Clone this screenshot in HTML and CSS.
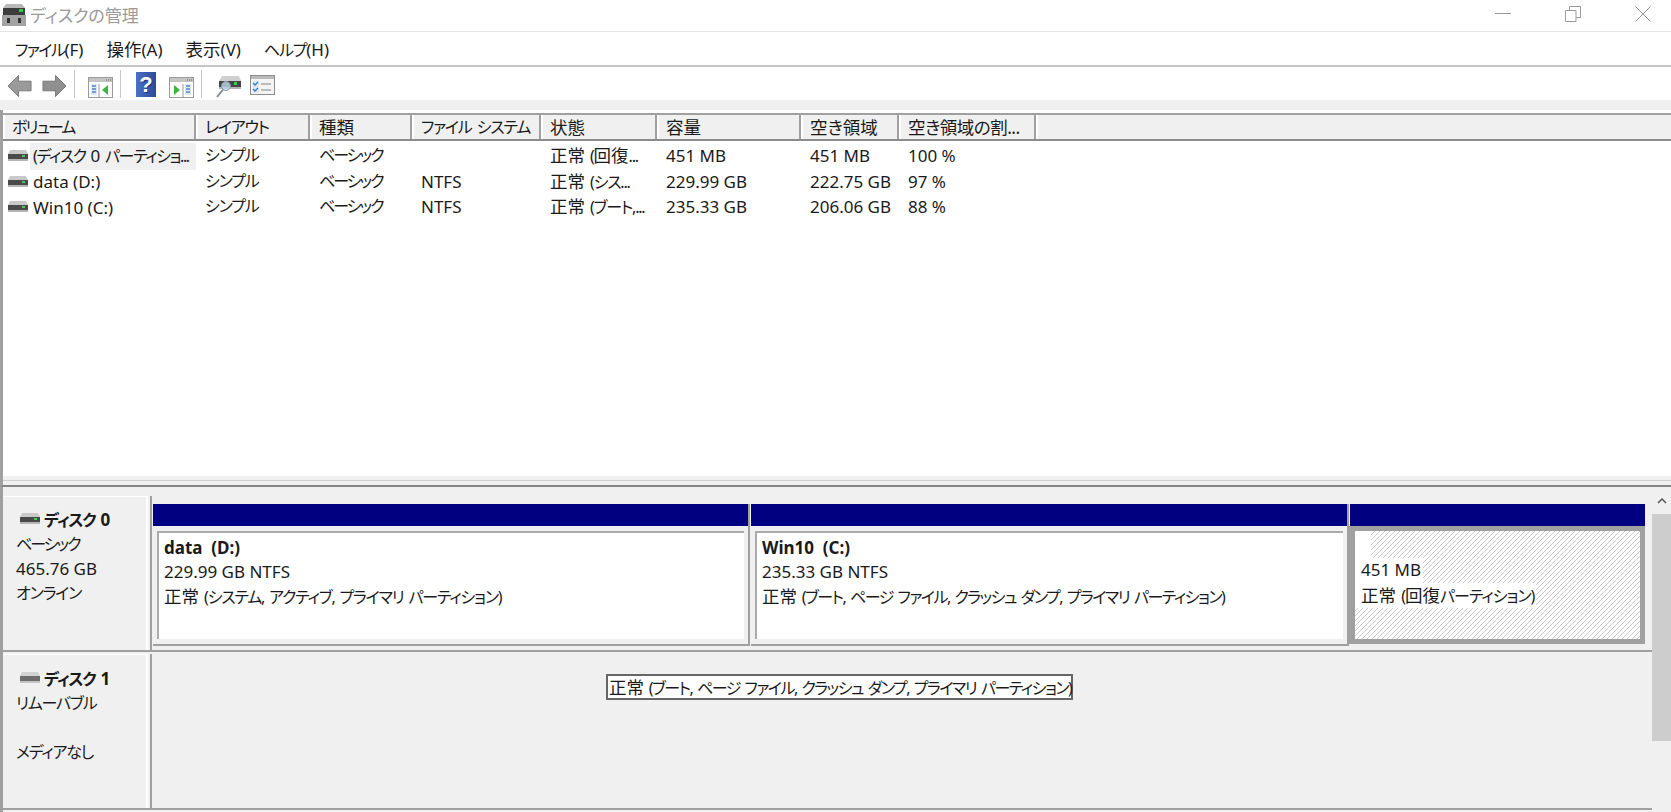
FILE: index.html
```html
<!DOCTYPE html>
<html lang="ja">
  <head>
    <meta charset="UTF-8" />
    <title>ディスクの管理</title>
    <link rel="stylesheet" href="styles.css">
  </head>
  <body>
    <svg class="sprites" width="0" height="0" aria-hidden="true">
      <symbol id="drive" viewBox="0 0 20 12">
        <path d="M2 0h16l2 4H0z" fill="#c9c9c9" />
        <rect x="0" y="4" width="20" height="5" fill="#4a4a4a" />
        <rect x="14" y="5" width="3" height="2" fill="#3fd04a" />
        <rect x="0" y="9" width="20" height="2" fill="#b5b5b5" />
      </symbol>
      <symbol id="drive-off" viewBox="0 0 20 12">
        <path d="M2 0h16l2 4H0z" fill="#d2d2d2" />
        <rect x="0" y="4" width="20" height="5" fill="#6c6c6c" />
        <rect x="0" y="9" width="20" height="2" fill="#c4c4c4" />
      </symbol>
    </svg>

    <div class="app">
      <header class="titlebar">
        <div class="title">
          <svg class="title-icon" width="26" height="23" viewBox="0 0 26 23">
            <path d="M5 0h16l3 4H2z" fill="#b9b9b9" />
            <rect x="2" y="4" width="22" height="7" fill="#3c3c3c" />
            <rect x="18" y="5" width="4" height="3" fill="#35c24a" />
            <rect x="1" y="11" width="24" height="11" fill="#a3a3a3" />
            <rect x="6" y="14" width="3" height="5" fill="#333" />
            <rect x="17" y="14" width="3" height="5" fill="#333" />
          </svg>
          <span>ディスクの管理</span>
        </div>
        <div class="win-controls">
          <svg width="16" height="16" viewBox="0 0 16 16"><path d="M0 7.5h16" /></svg>
          <svg width="16" height="16" viewBox="0 0 16 16"><path d="M.5 4.5h10.5v11H.5zM4.5 4.500V.5h11v11H11" /></svg>
          <svg width="16" height="16" viewBox="0 0 16 16"><path d="M.5.5l15 15M15.500.5l-15 15" /></svg>
        </div>
      </header>

      <nav class="menubar">
        <span class="menu-file">ファイル<span class="lat">(F)</span></span>
        <span><span class="kj">操作</span><span class="lat">(A)</span></span>
        <span><span class="kj">表示</span><span class="lat">(V)</span></span>
        <span>ヘルプ<span class="lat">(H)</span></span>
      </nav>

      <div class="toolbar">
        <svg class="tool-arrow" width="25" height="24" viewBox="0 0 26 24">
          <path d="M1 12L12 1v6h13v10H12v6z" fill="#9a9a9a" stroke="#777" />
        </svg>
        <svg class="tool-arrow next" width="25" height="24" viewBox="0 0 26 24">
          <path d="M25 12L14 1v6H1v10h13v6z" fill="#8f8f8f" stroke="#777" />
        </svg>
        <i class="tool-sep"></i>
        <svg class="tool-win" width="25" height="21" viewBox="0 0 25 21">
          <rect x=".5" y=".5" width="24" height="20" fill="#fff" stroke="#9a9a9a" />
          <rect x="1" y="1" width="23" height="4" fill="#c4c4c4" />
          <path d="M18 3h1M20 3h1M22 3h1" stroke="#666" />
          <rect x="3" y="7" width="6" height="11" fill="#dbe7f3" />
          <path d="M4 9h4M4 12h4M4 15h4" stroke="#4f8bc9" stroke-width="1.500" />
          <path d="M11 7v13" stroke="#9a9a9a" />
          <path d="M14 13l6-5v10z" fill="#3eb53e" />
        </svg>
        <i class="tool-sep"></i>
        <span class="tool-help">?</span>
        <svg class="tool-win" width="25" height="21" viewBox="0 0 25 21">
          <rect x=".5" y=".5" width="24" height="20" fill="#fff" stroke="#9a9a9a" />
          <rect x="1" y="1" width="23" height="4" fill="#c4c4c4" />
          <path d="M18 3h1M20 3h1M22 3h1" stroke="#666" />
          <rect x="16" y="7" width="6" height="11" fill="#dbe7f3" />
          <path d="M17 9h4M17 12h4M17 15h4" stroke="#4f8bc9" stroke-width="1.500" />
          <path d="M14 7v13" stroke="#9a9a9a" />
          <path d="M5 8l6 5-6 5z" fill="#3eb53e" />
        </svg>
        <i class="tool-sep"></i>
        <svg class="tool-find" width="25" height="23" viewBox="0 0 25 23">
          <path d="M6 1h17l2 5H3z" fill="#cfcfcf" />
          <rect x="3" y="6" width="22" height="6" fill="#444" />
          <rect x="18" y="7" width="3" height="3" fill="#3fd04a" />
          <rect x="3" y="12" width="22" height="2" fill="#b5b5b5" />
          <circle cx="10" cy="11" r="4.500" fill="#bcd9ee" fill-opacity=".8" stroke="#8a9aa8" />
          <path d="M7 14.500L1 22" stroke="#8a8a8a" stroke-width="2" />
        </svg>
        <svg class="tool-check" width="25" height="20" viewBox="0 0 25 20">
          <rect x=".5" y=".5" width="24" height="19" fill="#f4f4f4" stroke="#8c8c8c" />
          <rect x="1" y="1" width="23" height="3" fill="#bbb" />
          <rect x="3" y="6" width="6" height="12" fill="#dbe7f3" />
          <path d="M3 8l2 2 3-3M3 14l2 2 3-3" fill="none" stroke="#2f7fd0" stroke-width="1.300" />
          <path d="M11 9h10M11 15h10" stroke="#a8a8a8" stroke-width="1.500" />
        </svg>
      </div>
      <div class="toolstrip"></div>

      <section class="volumes">
        <div class="vol-grid vol-head">
          <div class="tight">ボリューム</div>
          <div>レイアウト</div>
          <div class="kj">種類</div>
          <div>ファイル システム</div>
          <div class="kj">状態</div>
          <div class="kj">容量</div>
          <div class="kj">空き領域</div>
          <div class="kj squeeze">空き領域の割...</div>
          <div class="head-fill"></div>
        </div>
        <div class="vol-grid vol-row">
          <div class="vol-cell"><svg class="drive-icon" width="20" height="12"><use href="#drive" /></svg><span class="vol-name selected">(ディスク <span class="lat">0</span> パーティショ...</span></div>
          <div>シンプル</div>
          <div class="tight">ベーシック</div>
          <div></div>
          <div><span class="kj">正常</span> (<span class="kj">回復</span>...</div>
          <div class="lat">451 MB</div>
          <div class="lat">451 MB</div>
          <div class="lat">100 %</div>
        </div>
        <div class="vol-grid vol-row">
          <div class="vol-cell"><svg class="drive-icon" width="20" height="12"><use href="#drive" /></svg><span class="vol-name lat">data (D:)</span></div>
          <div>シンプル</div>
          <div class="tight">ベーシック</div>
          <div class="lat">NTFS</div>
          <div><span class="kj">正常</span> (シス...</div>
          <div class="lat">229.99 GB</div>
          <div class="lat">222.75 GB</div>
          <div class="lat">97 %</div>
        </div>
        <div class="vol-grid vol-row">
          <div class="vol-cell"><svg class="drive-icon" width="20" height="12"><use href="#drive" /></svg><span class="vol-name lat">Win10 (C:)</span></div>
          <div>シンプル</div>
          <div class="tight">ベーシック</div>
          <div class="lat">NTFS</div>
          <div><span class="kj">正常</span> (ブート,...</div>
          <div class="lat">235.33 GB</div>
          <div class="lat">206.06 GB</div>
          <div class="lat">88 %</div>
        </div>
      </section>

      <div class="splitter"></div>

      <section class="lower">
        <div class="disks">
          <div class="disk disk-0">
            <div class="disk-label">
              <div class="disk-title"><svg class="drive-icon" width="20" height="12"><use href="#drive" /></svg><b>ディスク <span class="lat">0</span></b></div>
              <div class="tight">ベーシック</div>
              <div class="lat">465.76 GB</div>
              <div>オンライン</div>
            </div>
            <div class="disk-body">
              <div class="partition part-data">
                <div class="part-head"></div>
                <div class="part-box">
                  <div class="part-inner">
                    <b class="lat">data&nbsp;&nbsp;(D:)</b>
                    <div class="lat">229.99 GB NTFS</div>
                    <div class="status-data"><span class="kj">正常</span> (システム, アクティブ, プライマリ パーティション)</div>
                  </div>
                </div>
              </div>
              <div class="partition part-win">
                <div class="part-head"></div>
                <div class="part-box">
                  <div class="part-inner">
                    <b class="lat">Win10&nbsp;&nbsp;(C:)</b>
                    <div class="lat">235.33 GB NTFS</div>
                    <div class="status-long"><span class="kj">正常</span> (ブート, ページ ファイル, クラッシュ ダンプ, プライマリ パーティション)</div>
                  </div>
                </div>
              </div>
              <div class="partition part-rec">
                <div class="part-head"></div>
                <div class="part-box hatch-frame">
                  <div class="hatch">
                    <div class="hatch-blank"></div>
                    <div class="hatch-line lat">451 MB</div>
                    <div class="hatch-line"><span class="kj">正常</span> (<span class="kj">回復</span>パーティション)</div>
                  </div>
                </div>
              </div>
            </div>
          </div>

          <div class="disk disk-1">
            <div class="disk-label">
              <div class="disk-title"><svg class="drive-icon" width="20" height="12"><use href="#drive-off" /></svg><b>ディスク <span class="lat">1</span></b></div>
              <div>リムーバブル</div>
              <div>&nbsp;</div>
              <div>メディアなし</div>
            </div>
            <div class="disk-body"></div>
          </div>
        </div>

        <div class="scrollbar">
          <div class="scroll-up">
            <svg width="10" height="6" viewBox="0 0 10 6"><path d="M1 5l4-4 4 4" /></svg>
          </div>
          <div class="scroll-thumb"></div>
        </div>

        <div class="tooltip status-long"><span class="kj">正常</span> (ブート, ページ ファイル, クラッシュ ダンプ, プライマリ パーティション)</div>
      </section>
    </div>
  </body>
</html>
```

FILE: styles.css
```css
:root {
  --panel: #f0f0f0;
  --line: #a0a0a0;
  --text: #1a1a1a;
  --navy: #000080;
  --cols: 193px 114px 102px 129px 116px 144px 98px 137px 1fr;
}

html,
body {
  margin: 0;
  padding: 0;
  height: 100%;
  overflow: hidden;
  background: #fff;
}

body {
  font-family: "Noto Sans", "Noto Sans CJK JP", sans-serif;
  font-size: 16px;
  font-feature-settings: "palt";
  letter-spacing: -1.2px; /* kana runs narrow in the original UI font */
  word-spacing: 2px;
  color: var(--text);
}

/* latin and kanji are wider than the kana next to them */
.lat {
  font-size: 17px;
  letter-spacing: 0;
  word-spacing: 0;
}
.kj {
  font-size: 17.5px;
  letter-spacing: 0;
}
.kj.squeeze {
  letter-spacing: -0.5px;
}
.tight {
  letter-spacing: -2px;
}

.sprites {
  position: absolute;
}

.app {
  display: flex;
  flex-direction: column;
  height: 812px;
}

/* title bar */
.titlebar {
  display: flex;
  align-items: center;
  justify-content: space-between;
  height: 32px;
  flex: none;
  box-sizing: border-box;
  border-bottom: 1px solid #e5e5e5;
}
.title {
  display: flex;
  align-items: center;
  gap: 3px;
  padding-left: 1px;
  font-size: 17px;
  letter-spacing: 0;
  color: #9a9a9a;
}
.title span {
  margin-top: -2px;
}
.win-controls {
  display: flex;
  gap: 54px;
  padding-right: 20px;
  margin-top: -3px;
}
.win-controls svg {
  fill: none;
  stroke: #999;
}

/* menu */
.menubar {
  display: flex;
  align-items: center;
  gap: 23px;
  height: 35px;
  flex: none;
  box-sizing: border-box;
  padding-left: 15px;
  border-bottom: 2px solid #c4c4ca;
}
.menu-file {
  letter-spacing: -1.5px;
}

/* toolbar */
.toolbar {
  display: flex;
  align-items: center;
  height: 33px;
  flex: none;
  padding-left: 7px;
}
.tool-arrow {
  margin-top: 4px;
}
.tool-arrow.next {
  margin-left: 10px;
}
.tool-sep {
  width: 1px;
  height: 28px;
  background: #c8c8c8;
  margin: 0 13px 0 7px;
}
.tool-win {
  margin-top: 7px;
}
.tool-help {
  width: 20px;
  height: 25px;
  flex: none;
  margin: 2px 13px 0 2px;
  font-family: "Liberation Sans", sans-serif;
  font-size: 22px;
  font-weight: 700;
  line-height: 25px;
  letter-spacing: 0;
  text-align: center;
  color: #fff;
  text-shadow: 1px 1px 0 #1d3475;
  background: linear-gradient(90deg, #4a70c8, #2c4a96);
}
.tool-find {
  margin-left: 1px;
  margin-top: 5px;
}
.tool-check {
  margin-left: 9px;
  margin-top: 2px;
}
.toolstrip {
  height: 10px;
  flex: none;
  background: var(--panel);
}

/* volume list */
.volumes {
  height: 366px;
  flex: none;
  box-sizing: border-box;
  padding-top: 3px;
  border-left: 3px solid var(--line);
}
.vol-grid {
  display: grid;
  grid-template-columns: var(--cols);
}
.vol-head {
  height: 28px;
  box-sizing: border-box;
  margin-bottom: 2px;
  background: var(--panel);
  border-top: 2px solid var(--line);
  border-bottom: 2px solid #8c8c8c;
}
.vol-head > div {
  padding-left: 9px;
  line-height: 24px;
  border-right: 2px solid var(--line);
  box-shadow: inset 2px 0 0 #fff;
}
.vol-head > .head-fill {
  border-right: none;
}
.vol-row {
  height: 25.6px;
  line-height: 25.6px;
}
.vol-row > div {
  padding-left: 9px;
  white-space: nowrap;
}
.vol-row > .vol-cell {
  display: flex;
  align-items: center;
  padding-left: 5px;
}
.drive-icon {
  flex: none;
}
.vol-name {
  flex: 1;
  min-width: 0;
  margin-left: 2px;
  padding-left: 3px;
}
.vol-name.selected {
  letter-spacing: -1.4px;
  background: var(--panel);
}

/* splitter */
.splitter {
  height: 11px;
  flex: none;
  box-sizing: border-box;
  background: var(--panel);
  border-left: 3px solid var(--line);
  border-bottom: 2px solid #858585;
  box-shadow: inset 0 -4px 0 var(--panel), inset 0 -5px 0 #cfcfcf;
}

/* disks */
.lower {
  position: relative;
  display: flex;
  flex: 1;
  min-height: 0;
  background: var(--panel);
  border-left: 3px solid var(--line);
}
.disks {
  flex: 1;
}
.disk {
  display: flex;
  box-sizing: border-box;
  border-bottom: 2px solid var(--line);
}
.disk-0 {
  height: 165px;
  padding-top: 9px;
}
.disk-1 {
  height: 158px;
  padding-top: 2px;
}
.disk-label {
  width: 130px;
  flex: none;
  padding: 12px 0 0 13px;
  line-height: 24.300px;
  border-top: 1px solid #fff;
  border-right: 2px solid #fff;
}
.disk-0 .disk-label {
  padding-top: 11px;
}
.disk-title {
  display: flex;
  align-items: center;
  gap: 4px;
  padding-left: 4px;
}
.disk-title .drive-icon {
  margin-top: -3px;
}
.disk-body {
  display: flex;
  flex: 1;
  margin-left: 2px;
  padding: 8px 0 0 1px;
  border-left: 2px solid var(--line);
}

/* partitions */
.partition {
  display: flex;
  flex-direction: column;
  height: 142px;
  flex: none;
}
.part-data {
  width: 597px;
  margin-right: 1px;
}
.part-win {
  width: 598px;
  margin-right: 1px;
}
.part-rec {
  width: 297px;
}
.part-head {
  height: 22px;
  flex: none;
  margin-right: 2px;
  background: var(--navy);
}
.part-data .part-head,
.part-win .part-head {
  box-shadow: 2px 0 0 var(--line);
}
.part-box {
  display: flex;
  flex: 1;
  box-sizing: border-box;
  padding: 5px 4px 5px 4px;
  border-right: 2px solid var(--line);
  border-bottom: 2px solid var(--line);
}
.part-inner {
  flex: 1;
  box-sizing: border-box;
  padding: 3px 0 0 5px;
  line-height: 24px;
  white-space: nowrap;
  background: #fff;
  border-top: 2px solid #ababab;
  border-left: 2px solid #ababab;
}
.status-data {
  letter-spacing: -1.2px;
}
.status-long {
  letter-spacing: -1.5px;
}

/* recovery partition, drawn hatched */
.hatch-frame {
  padding: 0;
  margin: 0 2px 2px -2px;
  border: 5px solid var(--line);
  border-left-width: 7px;
}
.hatch {
  flex: 1;
  line-height: 24.500px;
  background: #fff url("data:image/svg+xml,%3Csvg xmlns='http://www.w3.org/2000/svg' width='5' height='5'%3E%3Cpath d='M-1 6L6 -1M-1 1L1 -1M4 6L6 4' stroke='%23cacaca' stroke-width='1'/%3E%3C/svg%3E");
}
.hatch-blank {
  width: 16px;
  height: 27px;
  background: #fff;
}
.hatch-line {
  width: fit-content;
  padding: 0 2px 0 6px;
  letter-spacing: -1px;
  background: #fff;
}
.hatch-line.lat {
  letter-spacing: 0;
}

/* scrollbar */
.scrollbar {
  width: 19px;
  flex: none;
  background: var(--panel);
}
.scroll-up {
  display: flex;
  align-items: center;
  justify-content: center;
  height: 27px;
}
.scroll-up svg {
  fill: none;
  stroke: #555;
  stroke-width: 1.500;
}
.scroll-thumb {
  height: 227px;
  background: #cdcdcd;
}

/* tooltip over the disk 1 row */
.tooltip {
  position: absolute;
  left: 603px;
  top: 187px;
  box-sizing: border-box;
  width: 467px;
  height: 26px;
  line-height: 22px;
  padding-left: 1px;
  white-space: nowrap;
  background: #fff;
  border: 2px solid #666;
}
```
